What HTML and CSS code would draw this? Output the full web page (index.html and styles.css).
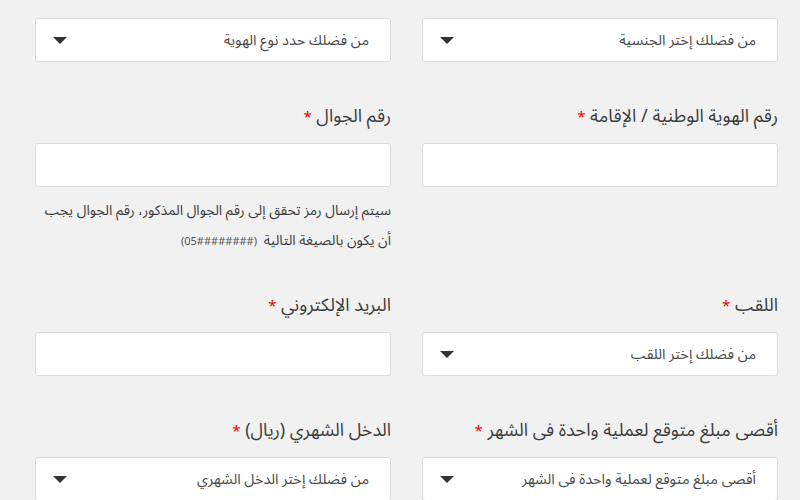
FILE: index.html
```html
<!DOCTYPE html>
<html lang="ar" dir="rtl">
<head>
    <meta charset="UTF-8">
    <meta name="viewport" content="width=device-width, initial-scale=1.0">
    <title>طلب التسجيل</title>
    <link rel="stylesheet" href="styles.css">
</head>
<body>

    <form class="form-grid">
        <!-- Nationality / ID type -->
        <div class="field">
            <div class="select-box">
                <span>من فضلك إختر الجنسية</span>
                <i class="arrow"></i>
            </div>
        </div>
        <div class="field">
            <div class="select-box">
                <span>من فضلك حدد نوع الهوية</span>
                <i class="arrow"></i>
            </div>
        </div>

        <!-- ID number / mobile -->
        <div class="field">
            <label>رقم الهوية الوطنية / الإقامة <em>*</em></label>
            <input type="text" class="text-box">
        </div>
        <div class="field">
            <label>رقم الجوال <em>*</em></label>
            <input type="text" class="text-box">
            <p class="help">سيتم إرسال رمز تحقق إلى رقم الجوال المذكور، رقم الجوال يجب أن يكون بالصيغة التالية <span class="format" dir="ltr">(05########)</span></p>
        </div>

        <!-- Title / email -->
        <div class="field">
            <label>اللقب <em>*</em></label>
            <div class="select-box">
                <span>من فضلك إختر اللقب</span>
                <i class="arrow"></i>
            </div>
        </div>
        <div class="field">
            <label>البريد الإلكتروني <em>*</em></label>
            <input type="email" class="text-box">
        </div>

        <!-- Max amount / monthly income -->
        <div class="field">
            <label>أقصى مبلغ متوقع لعملية واحدة فى الشهر <em>*</em></label>
            <div class="select-box">
                <span>أقصى مبلغ متوقع لعملية واحدة فى الشهر</span>
                <i class="arrow"></i>
            </div>
        </div>
        <div class="field">
            <label>الدخل الشهري (ريال) <em>*</em></label>
            <div class="select-box">
                <span>من فضلك إختر الدخل الشهري</span>
                <i class="arrow"></i>
            </div>
        </div>
    </form>

</body>
</html>
```

FILE: styles.css
```css
/* General styles */
body {
    font-family: "Noto Sans Arabic", "DejaVu Sans", sans-serif;
    background: #f1f1f1;
    color: #444;
    margin: 0;
    overflow: hidden;
}

.form-grid {
    display: grid;
    grid-template-columns: 356px 356px;
    column-gap: 31px;
    row-gap: 42px;
    align-items: start;
    padding: 18px 22px 0 0;
}

.field {
    display: flex;
    flex-direction: column;
}

label {
    display: block;
    height: 24px;
    font-size: 18px;
    line-height: 24px;
    margin-bottom: 15px;
    color: #3d3d3d;
}

label em {
    font-style: normal;
    font-size: 15px;
    line-height: 0;
    color: #e00;
}

/* Inputs and selects */
.text-box,
.select-box {
    box-sizing: border-box;
    height: 44px;
    width: 100%;
    background: #fff;
    border: 1px solid #dcdcdc;
    border-radius: 3px;
    margin: 0;
    font-family: inherit;
}

.select-box {
    display: flex;
    align-items: center;
    justify-content: space-between;
    padding: 0 21px 0 17px;
    font-size: 14.5px;
    color: #4a4a4a;
}

.arrow {
    width: 0;
    height: 0;
    border-left: 7.5px solid transparent;
    border-right: 7.5px solid transparent;
    border-top: 7px solid #333;
}

/* Help text under mobile */
.help {
    margin: 9px 0 -5px;
    font-size: 14px;
    line-height: 30px;
    color: #3d3d3d;
}

.help .format {
    margin-right: 3px;
    font-size: 11px;
    line-height: 0;
    color: #555;
}
```
